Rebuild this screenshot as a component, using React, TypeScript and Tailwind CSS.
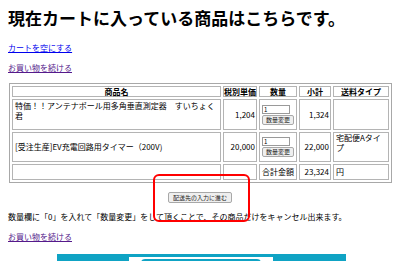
import React from "react";

function Qty() {
  return (
    <div className="pl-[2px] flex flex-col justify-center">
      <input
        readOnly
        value="1"
        className="block w-[28px] h-[9px] border border-[#9a9a9a] px-[1px] text-[6px] leading-[7px] bg-white"
      />
      <button className="block mt-[1px] w-[32px] h-[10px] border border-[#a8a8a8] rounded-[2px] bg-[#efefef] text-[6px] leading-[8px] text-[#222]">
        数量変更
      </button>
    </div>
  );
}

export default function App() {
  const c = "border border-[#b4b4b4] flex items-center";
  return (
    <div className="relative w-[400px] h-[261px] overflow-hidden bg-white text-black font-['Noto_Sans_CJK_JP','Liberation_Sans',sans-serif]">
      <h1 className="ml-[8px] pt-[8px] text-[17px] leading-[20px] font-bold">
        現在カートに入っている商品はこちらです。
      </h1>
      <p className="ml-[8px] mt-[15px] text-[8px] leading-[10px]">
        <a href="#" className="text-[#0000ee] underline">カートを空にする</a>
      </p>
      <p className="ml-[8px] mt-[10px] text-[8px] leading-[10px]">
        <a href="#" className="text-[#551a8b] underline">お買い物を続ける</a>
      </p>
      <div className="ml-[9px] mt-[10px] w-[383px] border border-[#a8a8a8] p-[2px] grid grid-cols-[209px_34px_38px_32px_56px] grid-rows-[11px_31px_30px_16px] gap-[2px] text-[8px] leading-[10px]">
        <div className={`${c} justify-center font-bold`}>商品名</div>
        <div className={`${c} justify-center font-bold whitespace-nowrap`}>税別単価</div>
        <div className={`${c} justify-center font-bold`}>数量</div>
        <div className={`${c} justify-center font-bold`}>小計</div>
        <div className={`${c} justify-center font-bold whitespace-nowrap`}>送料タイプ</div>

        <div className={`${c} pl-[2px] pr-[2px] pb-[8px]`}>
          特価！！アンテナポール用多角垂直測定器　すいちょく君
        </div>
        <div className={`${c} justify-end pr-[1px]`}>1,204</div>
        <div className={c}><Qty /></div>
        <div className={`${c} justify-end pr-[1px] whitespace-nowrap`}>1,324</div>
        <div className={c}></div>

        <div className={`${c} pl-[2px]`}>[受注生産]EV充電回路用タイマー（200V)</div>
        <div className={`${c} justify-end pr-[1px] whitespace-nowrap`}>20,000</div>
        <div className={c}><Qty /></div>
        <div className={`${c} justify-end pr-[1px] whitespace-nowrap`}>22,000</div>
        <div className={`${c} pl-[2px] pb-[8px]`}>宅配便Aタイプ</div>

        <div className={c}></div>
        <div className={c}></div>
        <div className={`${c} justify-center whitespace-nowrap`}>合計金額</div>
        <div className={`${c} justify-end pr-[1px] whitespace-nowrap`}>23,324</div>
        <div className={`${c} pl-[2px]`}>円</div>
      </div>
      <div className="mt-[9px] flex justify-center">
        <button className="h-[11px] px-[4px] border border-[#a8a8a8] rounded-[2px] bg-[#efefef] text-[6px] leading-[9px] text-[#222]">
          配送先の入力に進む
        </button>
      </div>
      <p className="ml-[8px] mt-[9px] text-[8px] leading-[10px] whitespace-nowrap">
        数量欄に「0」を入れて「数量変更」をして頂くことで、その商品だけをキャンセル出来ます。
      </p>
      <p className="ml-[8px] mt-[10px] text-[8px] leading-[10px]">
        <a href="#" className="text-[#551a8b] underline">お買い物を続ける</a>
      </p>
      <div className="ml-[57px] mt-[12px] w-[289px] h-[60px] bg-[#0fa3c4] pt-[3px]">
        <div className="ml-[72px] w-[144px] h-[40px] bg-white pt-[2px]">
          <div className="mx-[12px] h-[20px] border-t-2 border-[#0fa3c4] rounded-t-[4px]"></div>
        </div>
      </div>
      <div className="absolute left-[153px] top-[174px] w-[97px] h-[48px] border-2 border-[#ff0000] rounded-[6px]"></div>
    </div>
  );
}
